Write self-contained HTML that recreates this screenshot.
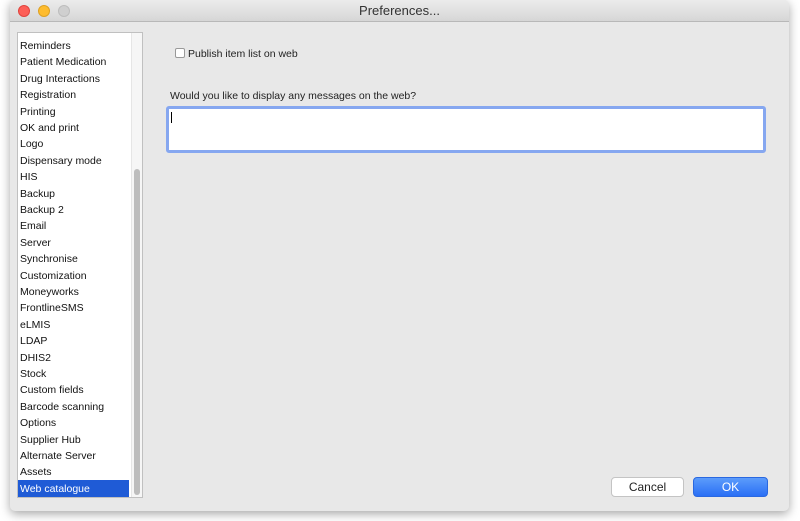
<!DOCTYPE html>
<html><head><meta charset="utf-8"><style>
*{margin:0;padding:0;box-sizing:border-box}
body{width:800px;height:521px;background:#fff;font-family:"Liberation Sans",sans-serif;position:relative;overflow:hidden}
.win{position:absolute;left:10px;top:0;width:779px;height:511px;background:#e8e8e8;border-radius:5px;box-shadow:0 3px 10px rgba(0,0,0,.35);overflow:hidden}
.tb{position:absolute;left:0;top:0;right:0;height:22px;background:linear-gradient(#ececec,#d6d6d6);border-bottom:1px solid #b8b8b8;text-align:center;font-size:13px;line-height:22px;color:#333}
.dot{position:absolute;top:5px;width:12px;height:12px;border-radius:50%}
.list{position:absolute;left:7px;top:32px;width:126px;height:466px;background:#fff;border:1px solid #c0c0c0}
.item{position:absolute;left:2px;font-size:10.5px;color:#111;height:16.4px;line-height:16.4px;white-space:nowrap;margin-top:1px}
.sel{position:absolute;left:0;top:447px;width:111px;height:17px;background:#1f5bd6}
.sb{position:absolute;left:113px;top:0;width:11px;height:464px;background:#f6f6f6;border-left:1px solid #e6e6e6}
.thumb{position:absolute;left:2px;top:136px;width:6px;height:326px;background:#bdbdbd;border-radius:3px}
.txt{font-size:10.5px;color:#222;position:absolute}
.cb{position:absolute;left:165px;top:48px;width:10px;height:10px;background:#fff;border:1px solid #999;border-radius:2px}
.field{position:absolute;left:156px;top:106px;width:600px;height:47px;background:#fff;border:3px solid #86a7f0;border-radius:3px}
.caret{position:absolute;left:2px;top:3px;width:1px;height:11px;background:#000}
.btn{position:absolute;top:477px;height:20px;border-radius:4px;font-size:12px;text-align:center;line-height:19px}
</style></head><body>
<div class="win">
<div class="tb">Preferences...
<div class="dot" style="left:8px;background:#fd5f57;border:1px solid #e0443e"></div>
<div class="dot" style="left:28px;background:#febc2e;border:1px solid #dea123"></div>
<div class="dot" style="left:48px;background:#cfcfcf;border:1px solid #bdbdbd"></div>
</div>
<div class="list">
<div class="sel"></div>
<div class="item" style="top:4px">Reminders</div>
<div class="item" style="top:20.4px">Patient Medication</div>
<div class="item" style="top:36.8px">Drug Interactions</div>
<div class="item" style="top:53.2px">Registration</div>
<div class="item" style="top:69.6px">Printing</div>
<div class="item" style="top:86px">OK and print</div>
<div class="item" style="top:102.4px">Logo</div>
<div class="item" style="top:118.8px">Dispensary mode</div>
<div class="item" style="top:135.2px">HIS</div>
<div class="item" style="top:151.6px">Backup</div>
<div class="item" style="top:168px">Backup 2</div>
<div class="item" style="top:184.4px">Email</div>
<div class="item" style="top:200.8px">Server</div>
<div class="item" style="top:217.2px">Synchronise</div>
<div class="item" style="top:233.6px">Customization</div>
<div class="item" style="top:250px">Moneyworks</div>
<div class="item" style="top:266.4px">FrontlineSMS</div>
<div class="item" style="top:282.8px">eLMIS</div>
<div class="item" style="top:299.2px">LDAP</div>
<div class="item" style="top:315.6px">DHIS2</div>
<div class="item" style="top:332px">Stock</div>
<div class="item" style="top:348.4px">Custom fields</div>
<div class="item" style="top:364.8px">Barcode scanning</div>
<div class="item" style="top:381.2px">Options</div>
<div class="item" style="top:397.6px">Supplier Hub</div>
<div class="item" style="top:414px">Alternate Server</div>
<div class="item" style="top:430.4px">Assets</div>
<div class="item" style="top:446.8px;color:#fff">Web catalogue</div>
<div class="sb"><div class="thumb"></div></div>
</div>
<div class="cb"></div>
<div class="txt" style="left:178px;top:48px">Publish item list on web</div>
<div class="txt" style="left:160px;top:90px">Would you like to display any messages on the web?</div>
<div class="field"><div class="caret"></div></div>
<div class="btn" style="left:601px;width:73px;background:#fff;border:1px solid #c4c4c4;color:#222">Cancel</div>
<div class="btn" style="left:683px;width:75px;background:linear-gradient(#5c9cfb,#2a6ff5);color:#fff;border:1px solid #2a68e0">OK</div>
</div>
</body></html>
